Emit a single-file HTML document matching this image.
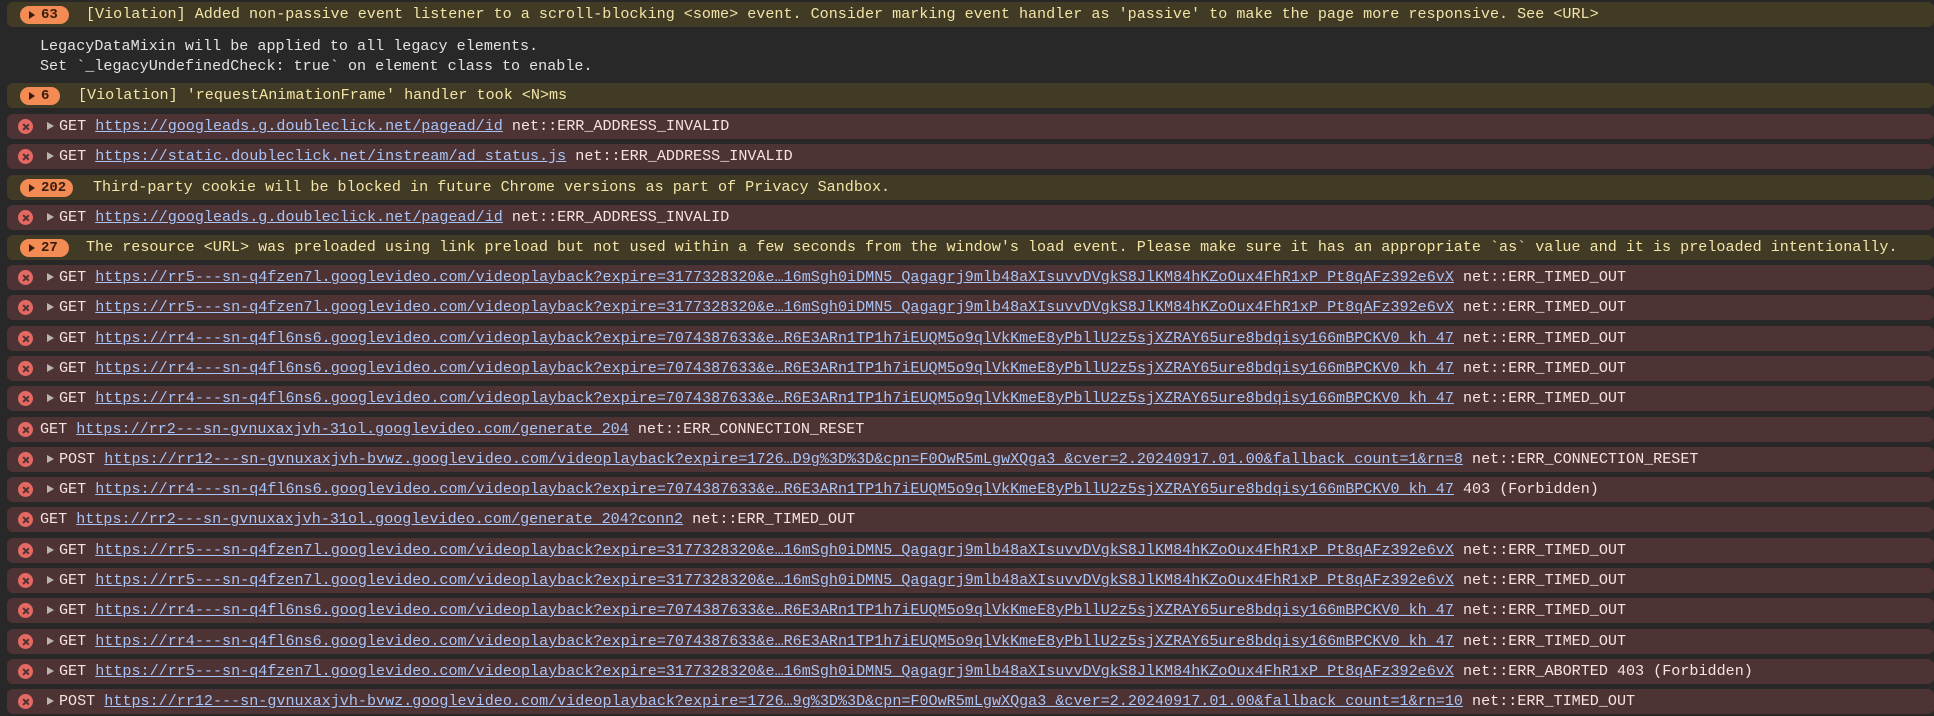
<!DOCTYPE html>
<html><head><meta charset="utf-8"><style>
*{margin:0;padding:0;box-sizing:border-box}
body{width:1934px;height:716px;background:#282828;overflow:hidden;position:relative;font-family:"Liberation Mono",monospace;font-size:15.1px;}
.r{position:absolute;left:7px;right:0;height:25px;border-radius:6px;line-height:25px;white-space:pre;}
.w{background:#413b26;color:#f3e4a6;}
.e{background:#4e3334;color:#f8e2de;}
.r span.t{position:absolute;top:0}
a{color:#a8c3f5;text-decoration:underline;}
.ic{position:absolute;left:11px;top:5px;width:15px;height:15px;border-radius:50%;background:#e46962;}
.ic:before,.ic:after{content:"";position:absolute;left:7px;top:3.5px;width:1.6px;height:8px;background:#4e3334;transform:rotate(45deg)}
.ic:after{transform:rotate(-45deg)}
.tri{position:absolute;left:40px;top:8px;width:0;height:0;border-left:7px solid #bdb3b0;border-top:4.5px solid transparent;border-bottom:4.5px solid transparent}
.bd{position:absolute;left:13px;top:4px;height:18px;border-radius:9px;background:#f28b54;color:#3a1d0c;font-weight:bold;line-height:18px;font-size:14px}
.bd i{position:absolute;left:9px;top:5px;border-left:6px solid #3a1d0c;border-top:4px solid transparent;border-bottom:4px solid transparent}
.bd b{position:absolute;left:21px;top:0}
.leg{position:absolute;left:40px;top:36px;color:#e3e3e3;line-height:20px;white-space:pre}
</style></head><body>
<div class="r w" style="top:2px"><div class="bd" style="width:49px"><i></i><b>63</b></div><span class="t" style="left:79px">[Violation] Added non-passive event listener to a scroll-blocking &lt;some&gt; event. Consider marking event handler as 'passive' to make the page more responsive. See &lt;URL&gt;</span></div>
<div class="leg">LegacyDataMixin will be applied to all legacy elements.
Set `_legacyUndefinedCheck: true` on element class to enable.</div>
<div class="r w" style="top:83px"><div class="bd" style="width:40px"><i></i><b>6</b></div><span class="t" style="left:71px">[Violation] 'requestAnimationFrame' handler took &lt;N&gt;ms</span></div>

<div class="r e" style="top:114px"><div class="ic"></div><div class="tri"></div><span class="t" style="left:52px">GET <a>https://googleads.g.doubleclick.net/pagead/id</a> net::ERR_ADDRESS_INVALID</span></div>
<div class="r e" style="top:144px"><div class="ic"></div><div class="tri"></div><span class="t" style="left:52px">GET <a>https://static.doubleclick.net/instream/ad_status.js</a> net::ERR_ADDRESS_INVALID</span></div>
<div class="r w" style="top:175px"><div class="bd" style="width:53px"><i></i><b>202</b></div><span class="t" style="left:86px">Third-party cookie will be blocked in future Chrome versions as part of Privacy Sandbox.</span></div>
<div class="r e" style="top:205px"><div class="ic"></div><div class="tri"></div><span class="t" style="left:52px">GET <a>https://googleads.g.doubleclick.net/pagead/id</a> net::ERR_ADDRESS_INVALID</span></div>
<div class="r w" style="top:235px"><div class="bd" style="width:49px"><i></i><b>27</b></div><span class="t" style="left:79px">The resource &lt;URL&gt; was preloaded using link preload but not used within a few seconds from the window's load event. Please make sure it has an appropriate `as` value and it is preloaded intentionally.</span></div>

<div class="r e" style="top:265px"><div class="ic"></div><div class="tri"></div><span class="t" style="left:52px">GET <a>https://rr5---sn-q4fzen7l.googlevideo.com/videoplayback?expire=3177328320&amp;e…16mSgh0iDMN5_Qagagrj9mlb48aXIsuvvDVgkS8JlKM84hKZoOux4FhR1xP_Pt8qAFz392e6vX</a> net::ERR_TIMED_OUT</span></div>
<div class="r e" style="top:295px"><div class="ic"></div><div class="tri"></div><span class="t" style="left:52px">GET <a>https://rr5---sn-q4fzen7l.googlevideo.com/videoplayback?expire=3177328320&amp;e…16mSgh0iDMN5_Qagagrj9mlb48aXIsuvvDVgkS8JlKM84hKZoOux4FhR1xP_Pt8qAFz392e6vX</a> net::ERR_TIMED_OUT</span></div>
<div class="r e" style="top:326px"><div class="ic"></div><div class="tri"></div><span class="t" style="left:52px">GET <a>https://rr4---sn-q4fl6ns6.googlevideo.com/videoplayback?expire=7074387633&amp;e…R6E3ARn1TP1h7iEUQM5o9qlVkKmeE8yPbllU2z5sjXZRAY65ure8bdqisy166mBPCKV0_kh_47</a> net::ERR_TIMED_OUT</span></div>
<div class="r e" style="top:356px"><div class="ic"></div><div class="tri"></div><span class="t" style="left:52px">GET <a>https://rr4---sn-q4fl6ns6.googlevideo.com/videoplayback?expire=7074387633&amp;e…R6E3ARn1TP1h7iEUQM5o9qlVkKmeE8yPbllU2z5sjXZRAY65ure8bdqisy166mBPCKV0_kh_47</a> net::ERR_TIMED_OUT</span></div>
<div class="r e" style="top:386px"><div class="ic"></div><div class="tri"></div><span class="t" style="left:52px">GET <a>https://rr4---sn-q4fl6ns6.googlevideo.com/videoplayback?expire=7074387633&amp;e…R6E3ARn1TP1h7iEUQM5o9qlVkKmeE8yPbllU2z5sjXZRAY65ure8bdqisy166mBPCKV0_kh_47</a> net::ERR_TIMED_OUT</span></div>
<div class="r e" style="top:417px"><div class="ic"></div><span class="t" style="left:33px">GET <a>https://rr2---sn-gvnuxaxjvh-31ol.googlevideo.com/generate_204</a> net::ERR_CONNECTION_RESET</span></div>
<div class="r e" style="top:447px"><div class="ic"></div><div class="tri"></div><span class="t" style="left:52px">POST <a>https://rr12---sn-gvnuxaxjvh-bvwz.googlevideo.com/videoplayback?expire=1726…D9g%3D%3D&amp;cpn=F0OwR5mLgwXQga3_&amp;cver=2.20240917.01.00&amp;fallback_count=1&amp;rn=8</a> net::ERR_CONNECTION_RESET</span></div>
<div class="r e" style="top:477px"><div class="ic"></div><div class="tri"></div><span class="t" style="left:52px">GET <a>https://rr4---sn-q4fl6ns6.googlevideo.com/videoplayback?expire=7074387633&amp;e…R6E3ARn1TP1h7iEUQM5o9qlVkKmeE8yPbllU2z5sjXZRAY65ure8bdqisy166mBPCKV0_kh_47</a> 403 (Forbidden)</span></div>
<div class="r e" style="top:507px"><div class="ic"></div><span class="t" style="left:33px">GET <a>https://rr2---sn-gvnuxaxjvh-31ol.googlevideo.com/generate_204?conn2</a> net::ERR_TIMED_OUT</span></div>
<div class="r e" style="top:538px"><div class="ic"></div><div class="tri"></div><span class="t" style="left:52px">GET <a>https://rr5---sn-q4fzen7l.googlevideo.com/videoplayback?expire=3177328320&amp;e…16mSgh0iDMN5_Qagagrj9mlb48aXIsuvvDVgkS8JlKM84hKZoOux4FhR1xP_Pt8qAFz392e6vX</a> net::ERR_TIMED_OUT</span></div>
<div class="r e" style="top:568px"><div class="ic"></div><div class="tri"></div><span class="t" style="left:52px">GET <a>https://rr5---sn-q4fzen7l.googlevideo.com/videoplayback?expire=3177328320&amp;e…16mSgh0iDMN5_Qagagrj9mlb48aXIsuvvDVgkS8JlKM84hKZoOux4FhR1xP_Pt8qAFz392e6vX</a> net::ERR_TIMED_OUT</span></div>
<div class="r e" style="top:598px"><div class="ic"></div><div class="tri"></div><span class="t" style="left:52px">GET <a>https://rr4---sn-q4fl6ns6.googlevideo.com/videoplayback?expire=7074387633&amp;e…R6E3ARn1TP1h7iEUQM5o9qlVkKmeE8yPbllU2z5sjXZRAY65ure8bdqisy166mBPCKV0_kh_47</a> net::ERR_TIMED_OUT</span></div>
<div class="r e" style="top:629px"><div class="ic"></div><div class="tri"></div><span class="t" style="left:52px">GET <a>https://rr4---sn-q4fl6ns6.googlevideo.com/videoplayback?expire=7074387633&amp;e…R6E3ARn1TP1h7iEUQM5o9qlVkKmeE8yPbllU2z5sjXZRAY65ure8bdqisy166mBPCKV0_kh_47</a> net::ERR_TIMED_OUT</span></div>
<div class="r e" style="top:659px"><div class="ic"></div><div class="tri"></div><span class="t" style="left:52px">GET <a>https://rr5---sn-q4fzen7l.googlevideo.com/videoplayback?expire=3177328320&amp;e…16mSgh0iDMN5_Qagagrj9mlb48aXIsuvvDVgkS8JlKM84hKZoOux4FhR1xP_Pt8qAFz392e6vX</a> net::ERR_ABORTED 403 (Forbidden)</span></div>
<div class="r e" style="top:689px"><div class="ic"></div><div class="tri"></div><span class="t" style="left:52px">POST <a>https://rr12---sn-gvnuxaxjvh-bvwz.googlevideo.com/videoplayback?expire=1726…9g%3D%3D&amp;cpn=F0OwR5mLgwXQga3_&amp;cver=2.20240917.01.00&amp;fallback_count=1&amp;rn=10</a> net::ERR_TIMED_OUT</span></div>
</body></html>
